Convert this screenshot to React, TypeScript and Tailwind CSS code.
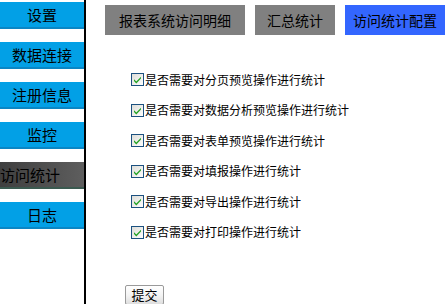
const menu = ["设置", "数据连接", "注册信息", "监控", "访问统计", "日志"];

const options = [
  "是否需要对分页预览操作进行统计",
  "是否需要对数据分析预览操作进行统计",
  "是否需要对表单预览操作进行统计",
  "是否需要对填报操作进行统计",
  "是否需要对导出操作进行统计",
  "是否需要对打印操作进行统计",
];

function CheckBox() {
  return (
    <svg width="13" height="13" viewBox="0 0 13 13" className="shrink-0">
      <defs>
        <linearGradient id="cb" x1="0" y1="0" x2="1" y2="1">
          <stop offset="0" stopColor="#dcdcd7" />
          <stop offset="1" stopColor="#ffffff" />
        </linearGradient>
      </defs>
      <rect x="0.5" y="0.5" width="12" height="12" fill="url(#cb)" stroke="#1c5180" />
      <path d="M3 6.2 L5.3 8.6 L10 3.8 L10 5.6 L5.3 10.4 L3 8 Z" fill="#21a121" />
    </svg>
  );
}

export default function App() {
  const font = { fontFamily: '"Noto Sans CJK SC", sans-serif' };
  return (
    <div className="flex h-[304px] w-[445px] bg-white overflow-hidden" style={font}>
      {/* Sidebar */}
      <div className="w-[86px] shrink-0 border-r-2 border-black pt-[2px] flex flex-col gap-[13px]">
        {menu.map((m) =>
          m === "访问统计" ? (
            <div
              key={m}
              className="h-[27px] w-[84px] bg-gradient-to-r from-[#3f3f3f] to-[#5e5e5e] border-b-2 border-[#3b5a50] text-[15px] leading-[25px] text-black text-left"
            >
              {m}
            </div>
          ) : (
            <div
              key={m}
              className="h-[27px] w-[84px] bg-[#02a0e6] border-b-2 border-[#0a86c4] text-[15px] leading-[25px] text-black text-center"
            >
              {m}
            </div>
          )
        )}
      </div>

      {/* Main */}
      <div className="flex-1 flex flex-col pl-[19px]">
        <div className="flex gap-[10px] pt-[5px]">
          <div className="h-[30px] w-[140px] bg-[#808080] text-[14px] leading-[30px] text-black text-center">
            报表系统访问明细
          </div>
          <div className="h-[30px] w-[80px] bg-[#808080] text-[14px] leading-[30px] text-black text-center">
            汇总统计
          </div>
          <div className="h-[30px] w-[100px] bg-[#3366ff] text-[14px] leading-[30px] text-black text-center">
            访问统计配置
          </div>
        </div>
        <div className="mt-[14px] h-[2px] bg-black" />

        <div className="mt-[24px] pl-[26px] flex flex-col gap-[17.6px]">
          {options.map((o) => (
            <label key={o} className="flex items-center h-[13px] gap-[1px] text-[12px] text-black">
              <CheckBox />
              <span className="whitespace-nowrap">{o}</span>
            </label>
          ))}
        </div>

        <div className="mt-[42px] pl-[20px]">
          <button className="h-[20px] w-[39px] rounded-[2px] border border-[#9a9a9a] bg-gradient-to-b from-white via-[#f4f4f4] to-[#dedede] text-[13px] leading-[14px] text-black">
            提交
          </button>
        </div>
      </div>
    </div>
  );
}
